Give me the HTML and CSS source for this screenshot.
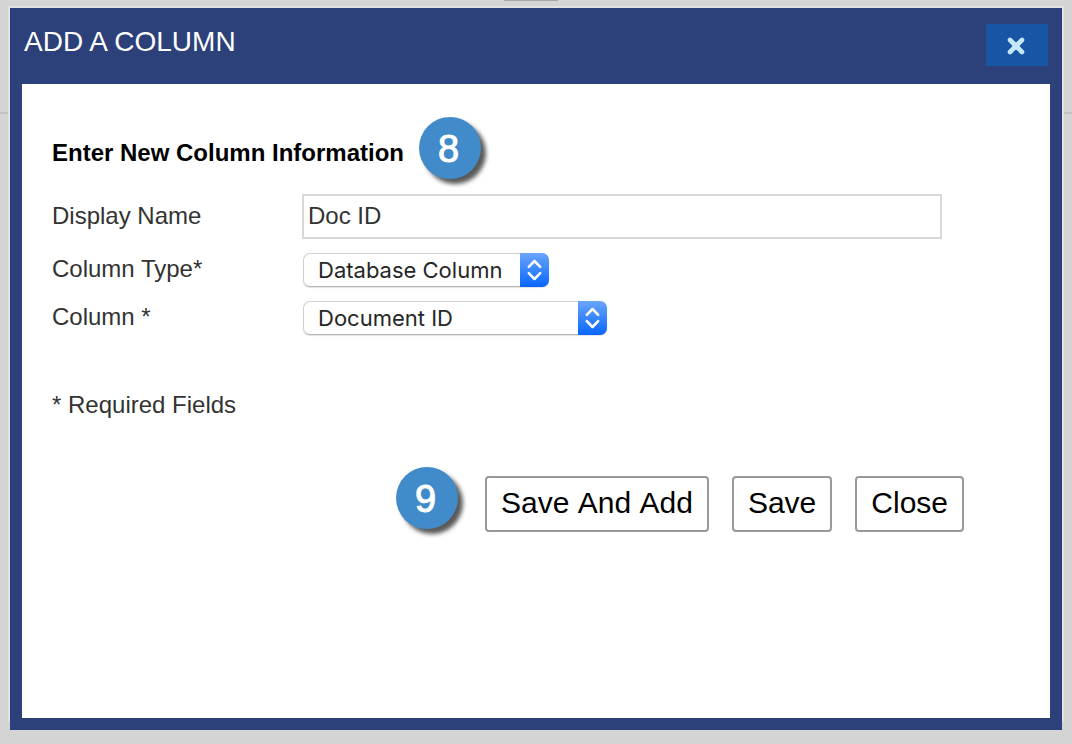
FILE: index.html
```
<!DOCTYPE html>
<html lang="en">
<head>
	<meta charset="UTF-8">
	<meta name="viewport" content="width=device-width, initial-scale=1.0">
	<title>Add a Column</title>
	<link rel="stylesheet" href="styles.css">
</head>
<body>
	<div class="handle"></div>
	<div class="frame">
		<div class="modal" role="dialog" aria-labelledby="title">
			<header class="header">
				<h1 id="title">ADD A COLUMN</h1>
				<button type="button" class="dismiss" aria-label="Dismiss">
					<svg width="20" height="20" viewBox="0 0 20 20">
						<path d="M3 4L15 16M15 4L3 16" stroke="#c5e8f9" stroke-width="4.6" stroke-linecap="round" />
						<circle cx="9" cy="10" r="3.8" fill="#c5e8f9" />
					</svg>
				</button>
			</header>
			<form class="panel">
				<div class="heading">
					<h2>Enter New Column Information</h2>
					<span class="badge">8</span>
				</div>
				<div class="fields">
					<label for="name">Display Name</label>
					<input type="text" id="name" value="Doc ID">

					<label for="type">Column Type*</label>
					<div class="select select-type">
						<select id="type">
							<option>Database Column</option>
						</select>
						<span class="arrows">
							<svg width="29" height="34" viewBox="0 0 29 34">
								<path d="M8.8 13.8L14.5 8L20.2 13.8M8.8 20.2L14.5 26L20.2 20.2" fill="none" stroke="#fff" stroke-width="2.5" stroke-linecap="round" stroke-linejoin="round" />
							</svg>
						</span>
					</div>

					<label for="column">Column *</label>
					<div class="select select-column">
						<select id="column">
							<option>Document ID</option>
						</select>
						<span class="arrows">
							<svg width="29" height="34" viewBox="0 0 29 34">
								<path d="M8.8 13.8L14.5 8L20.2 13.8M8.8 20.2L14.5 26L20.2 20.2" fill="none" stroke="#fff" stroke-width="2.5" stroke-linecap="round" stroke-linejoin="round" />
							</svg>
						</span>
					</div>
				</div>
				<p class="required">* Required Fields</p>
				<div class="actions">
					<span class="badge">9</span>
					<button type="button">Save And Add</button>
					<button type="button">Save</button>
					<button type="button">Close</button>
				</div>
			</form>
		</div>
	</div>
</body>
</html>
```
FILE: styles.css
```
* {
	box-sizing: border-box;
}
body {
	display: flex;
	flex-direction: column;
	min-height: 100vh;
	margin: 0;
	padding: 0 8px 14px;
	font-family: "Liberation Sans", Arial, sans-serif;
	font-size: 24px;
	line-height: 28px;
	color: #333;
	background: #d4d4d4 linear-gradient(#c2c2c2, #c2c2c2) 0 112px / 100% 2px no-repeat;
}
h1, h2, p {
	margin: 0;
}
.handle {
	width: 54px;
	height: 1px;
	margin: 0 auto 5px 47%;
	background: #a5a7ac;
}
.frame {
	display: flex;
	flex: 1;
	padding: 2px 2px 0;
	background: linear-gradient(#e2e2e2, #e2e2e2) 0 0 / 100% calc(100% - 8px) no-repeat;
}
.modal {
	display: flex;
	flex: 1;
	flex-direction: column;
	padding: 0 12px 12px;
	background: #2c4079;
}
.header {
	display: flex;
	justify-content: space-between;
	align-items: flex-start;
	padding: 16px 2px 18px;
}
.header h1 {
	font-size: 28px;
	font-weight: normal;
	line-height: 36px;
	color: #fff;
}
.dismiss {
	display: flex;
	align-items: center;
	justify-content: center;
	width: 62px;
	height: 42px;
	padding: 2px 0 0;
	border: 0;
	background: #1855a4;
}
.panel {
	flex: 1;
	padding: 33px 86px 34px 30px;
	background: #fff;
}
.heading {
	display: flex;
	align-items: center;
	gap: 15px;
	margin-bottom: 15px;
}
.heading h2 {
	padding-top: 10px;
	font-size: 24px;
	color: #000;
}
.badge {
	flex: none;
	width: 62px;
	height: 62px;
	border-radius: 50%;
	font-size: 38px;
	line-height: 64px;
	text-align: center;
	color: #fff;
	background: #428bca;
	box-shadow: 5px 5px 4px rgba(0, 0, 0, 0.65);
	-webkit-text-stroke: 1px #fff;
}
.heading .badge,
.actions .badge {
	padding-right: 3px;
}
.fields {
	display: grid;
	grid-template-columns: 250px minmax(0, 640px);
	row-gap: 14px;
	align-items: center;
}
.fields label {
	padding-bottom: 2px;
}
.fields input {
	width: 100%;
	height: 45px;
	padding: 0 4px 1px;
	border: 2px solid #d8d8d8;
	font: inherit;
	color: #333;
}
.select {
	position: relative;
	height: 34px;
	margin-left: 1px;
}
.select-type {
	width: 246px;
}
.select-column {
	width: 304px;
}
.select select {
	appearance: none;
	width: 100%;
	height: 34px;
	padding: 0 40px 0 14px;
	border: 1px solid #d0d0d0;
	border-bottom-color: #b8b8b8;
	border-radius: 7px;
	font-family: Inter, sans-serif;
	font-size: 22px;
	color: #262626;
	background: #fff;
	box-shadow: 0 1px 1px rgba(0, 0, 0, 0.12);
}
.arrows {
	position: absolute;
	top: 0;
	right: 0;
	width: 29px;
	height: 34px;
	border-radius: 0 7px 7px 0;
	background: linear-gradient(#6aa5fb, #0766fe);
	pointer-events: none;
}
.arrows svg {
	display: block;
}
.required {
	margin-top: 56px;
}
.actions {
	display: flex;
	justify-content: flex-end;
	align-items: flex-end;
	gap: 23px;
	margin-top: 48px;
}
.actions .badge {
	margin: 0 4px 3px 0;
}
.actions button {
	height: 56px;
	padding: 0 14px 2px;
	border: 2px solid #999;
	border-radius: 4px;
	font-family: inherit;
	font-size: 30px;
	font-kerning: none;
	color: #000;
	background: #fff;
}
```
